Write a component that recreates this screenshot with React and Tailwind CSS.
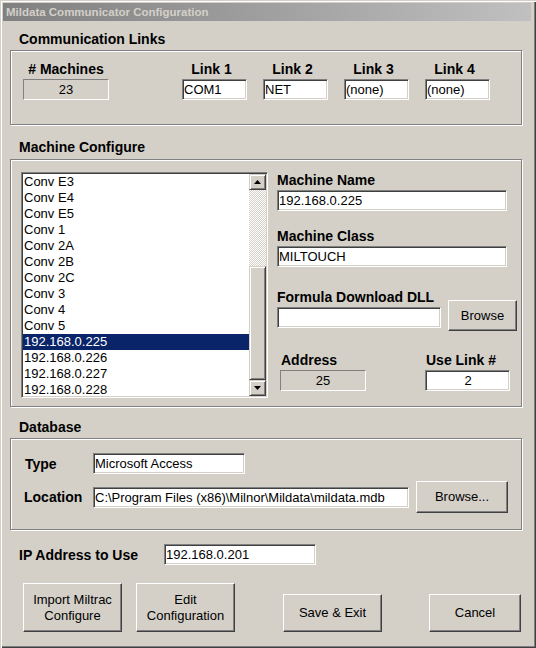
import React from "react";

// Classic Windows dialog: Mildata Communicator Configuration

const machines = [
  "Conv E3",
  "Conv E4",
  "Conv E5",
  "Conv 1",
  "Conv 2A",
  "Conv 2B",
  "Conv 2C",
  "Conv 3",
  "Conv 4",
  "Conv 5",
  "192.168.0.225",
  "192.168.0.226",
  "192.168.0.227",
  "192.168.0.228",
];

const links = ["COM1", "NET", "(none)", "(none)"];

const TextBox = ({ className = "", value, center }) => (
  <div
    className={`h-[21px] bg-white border border-t-[#808080] border-l-[#808080] border-r-white border-b-white shadow-[inset_1px_1px_0_#404040,inset_-1px_-1px_0_#d4d0c8] pl-[1px] text-[13px] leading-[19px] whitespace-nowrap overflow-hidden ${
      center ? "text-center" : ""
    } ${className}`}
  >
    {value}
  </div>
);

const ReadBox = ({ className = "", value }) => (
  <div
    className={`h-[21px] bg-[#d4d0c8] border border-t-[#808080] border-l-[#808080] border-r-white border-b-white text-center text-[13px] leading-[19px] ${className}`}
  >
    {value}
  </div>
);

const Button = ({ className = "", children }) => (
  <div
    className={`flex items-center justify-center text-center bg-[#d4d0c8] border border-t-white border-l-white border-r-[#404040] border-b-[#404040] shadow-[inset_-1px_-1px_0_#808080] text-[13px] leading-[16px] ${className}`}
  >
    {children}
  </div>
);

const Label = ({ className = "", children }) => (
  <div className={`h-[16px] text-[14px] leading-[16px] font-bold whitespace-nowrap ${className}`}>
    {children}
  </div>
);

const groupBox =
  "w-[512px] border border-[#808080] shadow-[inset_1px_1px_0_#fff,1px_1px_0_#fff]";

const ScrollButton = ({ up }) => (
  <div className="h-[16px] flex items-center justify-center bg-[#d4d0c8] border border-t-[#d4d0c8] border-l-[#d4d0c8] border-r-[#404040] border-b-[#404040] shadow-[inset_1px_1px_0_#fff,inset_-1px_-1px_0_#808080]">
    <svg width="7" height="4" viewBox="0 0 7 4">
      {up ? (
        <polygon points="0,4 7,4 3.5,0" fill="#000" />
      ) : (
        <polygon points="0,0 7,0 3.5,4" fill="#000" />
      )}
    </svg>
  </div>
);

export default function App() {
  return (
    <div className="w-[536px] h-[648px] bg-[#d4d0c8] text-black font-['Liberation_Sans',Arial,sans-serif] shadow-[inset_1px_1px_0_#d4d0c8,inset_2px_2px_0_#fff,inset_-1px_-1px_0_#404040,inset_-2px_-2px_0_#808080] p-[3px] flex flex-col overflow-hidden">
      {/* title bar */}
      <div className="h-[18px] mr-[2px] bg-linear-to-r from-[#808080] to-[#c0c0c0] pl-[3px] text-[11.5px] font-bold text-[#d4d0c8] leading-[18px]">
        Mildata Communicator Configuration
      </div>

      <div className="px-[7px] flex flex-col">
        {/* Communication Links */}
        <Label className="mt-[10px] ml-[9px]">Communication Links</Label>
        <div className={`${groupBox} mt-[3px] h-[75px] pt-[10px] pl-[12px] flex`}>
          <div className="w-[86px] flex flex-col">
            <Label className="text-center">
              # Machines
            </Label>
            <ReadBox className="mt-[2px]" value="23" />
          </div>
          <div className="ml-[73px] flex gap-[16px]">
            {links.map((l, i) => (
              <div key={i} className="w-[65px] flex flex-col">
                <Label className="text-center pr-[6px]">Link {i + 1}</Label>
                <TextBox className="mt-[2px]" value={l} />
              </div>
            ))}
          </div>
        </div>

        {/* Machine Configure */}
        <Label className="mt-[14px] ml-[9px]">Machine Configure</Label>
        <div className={`${groupBox} mt-[4px] h-[248px] pt-[12px] pl-[10px] flex`}>
          <div className="w-[247px] h-[226px] flex bg-white border border-t-[#808080] border-l-[#808080] border-r-white border-b-white shadow-[inset_1px_1px_0_#404040,inset_-1px_-1px_0_#d4d0c8] p-[1px]">
            <div className="flex-1 overflow-hidden text-[13px]">
              {machines.map((m) => (
                <div
                  key={m}
                  className={`h-[16px] leading-[16px] pl-[1px] whitespace-nowrap ${
                    m === "192.168.0.225" ? "bg-[#0a246a] text-white" : ""
                  }`}
                >
                  {m}
                </div>
              ))}
            </div>
            <div className="w-[17px] flex flex-col">
              <ScrollButton up />
              <div className="h-[76px] bg-[image:repeating-conic-gradient(#fff_0_25%,#d4d0c8_0_50%)] bg-[length:2px_2px]" />
              <div className="flex-1 bg-[#d4d0c8] border border-t-[#d4d0c8] border-l-[#d4d0c8] border-r-[#404040] border-b-[#404040] shadow-[inset_1px_1px_0_#fff,inset_-1px_-1px_0_#808080]" />
              <ScrollButton />
            </div>
          </div>

          <div className="ml-[9px] flex flex-col">
            <Label>Machine Name</Label>
            <TextBox className="mt-[2px] w-[230px]" value="192.168.0.225" />
            <Label className="mt-[17px]">Machine Class</Label>
            <TextBox className="mt-[2px] w-[230px]" value="MILTOUCH" />
            <div className="mt-[22px] flex items-start">
              <div className="w-[164px] flex flex-col">
                <Label>Formula Download DLL</Label>
                <TextBox className="mt-[2px]" value="" />
              </div>
              <Button className="ml-[7px] mt-[11px] w-[69px] h-[31px]">Browse</Button>
            </div>
            <div className="mt-[21px] flex">
              <div className="ml-[3px] w-[86px] flex flex-col">
                <Label className="pl-[1px]">Address</Label>
                <ReadBox className="mt-[2px]" value="25" />
              </div>
              <div className="ml-[59px] w-[85px] flex flex-col">
                <Label className="pl-[1px]">Use Link #</Label>
                <TextBox className="mt-[2px]" value="2" center />
              </div>
            </div>
          </div>
        </div>

        {/* Database */}
        <Label className="mt-[12px] ml-[9px]">Database</Label>
        <div className={`${groupBox} mt-[3px] h-[92px] pt-[14px] pl-[13px] flex flex-col`}>
          <div className="h-[21px] flex items-center">
            <Label className="w-[69px] pl-[1px]">Type</Label>
            <TextBox className="w-[152px]" value="Microsoft Access" />
          </div>
          <div className="mt-[7px] h-[32px] flex items-center">
            <Label className="w-[69px]">Location</Label>
            <TextBox
              className="w-[316px]"
              value="C:\Program Files (x86)\Milnor\Mildata\mildata.mdb"
            />
            <Button className="ml-[7px] w-[92px] h-[32px]">Browse...</Button>
          </div>
        </div>

        {/* IP address */}
        <div className="mt-[14px] h-[21px] flex items-center">
          <Label className="ml-[9px] w-[145px]">IP Address to Use</Label>
          <TextBox className="w-[152px]" value="192.168.0.201" />
        </div>

        {/* buttons */}
        <div className="mt-[18px] h-[49px] flex items-end">
          <Button className="ml-[13px] w-[99px] h-[49px]">
            Import Miltrac
            <br />
            Configure
          </Button>
          <Button className="ml-[14px] w-[99px] h-[49px]">
            Edit
            <br />
            Configuration
          </Button>
          <Button className="ml-[48px] w-[99px] h-[38px]">Save &amp; Exit</Button>
          <Button className="ml-[47px] w-[92px] h-[38px]">Cancel</Button>
        </div>
      </div>
    </div>
  );
}
